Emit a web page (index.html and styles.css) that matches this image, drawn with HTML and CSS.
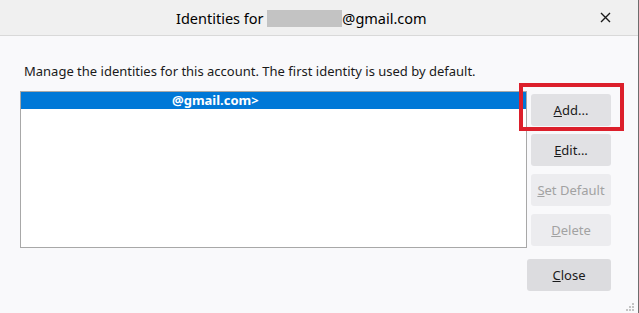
FILE: index.html
```html
<!DOCTYPE html>
<html lang="en">
<head>
    <meta charset="UTF-8">
    <title>Identities</title>
    <link rel="stylesheet" href="styles.css">
</head>
<body>
    <div class="window">
        <div class="titlebar">
            <span class="title">Identities for <span class="redacted"></span>@gmail.com</span>
            <span class="close-x">
                <svg width="11" height="11" viewBox="0 0 11 11"><path d="M1 1 L10 10 M10 1 L1 10" stroke="#1a1a1a" stroke-width="1.4" fill="none"/></svg>
            </span>
        </div>

        <div class="content">
            <p class="message">Manage the identities for this account. The first identity is used by default.</p>

            <div class="main">
                <div class="listbox">
                    <div class="item selected">@gmail.com&gt;</div>
                </div>
                <div class="buttons">
                    <div class="highlight-wrap">
                        <button class="btn"><u>A</u>dd...</button>
                        <div class="highlight"></div>
                    </div>
                    <button class="btn"><u>E</u>dit...</button>
                    <button class="btn" disabled><u>S</u>et Default</button>
                    <button class="btn" disabled><u>D</u>elete</button>
                </div>
            </div>

            <div class="footer">
                <button class="btn close-btn"><u>C</u>lose</button>
            </div>
        </div>

        <svg class="grip" width="10" height="10" viewBox="0 0 10 10">
            <rect x="7" y="1" width="2" height="2" fill="#c4c4c4"/>
            <rect x="4" y="4" width="2" height="2" fill="#c4c4c4"/>
            <rect x="7" y="4" width="2" height="2" fill="#c4c4c4"/>
            <rect x="1" y="7" width="2" height="2" fill="#c4c4c4"/>
            <rect x="4" y="7" width="2" height="2" fill="#c4c4c4"/>
            <rect x="7" y="7" width="2" height="2" fill="#c4c4c4"/>
        </svg>
    </div>
</body>
</html>
```

FILE: styles.css
```css
/* Dialog window */
body {
    margin: 0;
    padding: 0;
    font-family: "Noto Sans", "Open Sans", sans-serif;
    font-size: 13px;
    color: #1a1a1a;
    background-color: #f9f9fb;
}
.window {
    position: relative;
    width: 639px;
    height: 313px;
    box-sizing: border-box;
    border-right: 1px solid #6d6d6d;
    background-color: #f9f9fb;
    overflow: hidden;
}
.titlebar {
    height: 35px;
    display: flex;
    align-items: center;
    padding-left: 176px;
    background-color: #f0f0f0;
    border-bottom: 1px solid #d9d9d9;
}
.title {
    font-size: 14.5px;
    color: #000;
}
.redacted {
    display: inline-block;
    width: 75px;
    height: 17px;
    vertical-align: -3px;
    background-color: #c3c3c3;
}
.close-x {
    margin-left: auto;
    width: 44px;
    display: flex;
    justify-content: center;
    padding-right: 11px;
}
.content {
    padding: 26px 27px 0 20px;
}
.message {
    margin: 0 0 11px 4px;
    line-height: 18px;
}
.main {
    display: flex;
}
.listbox {
    width: 507px;
    height: 157px;
    box-sizing: border-box;
    border: 1px solid #a8a8a8;
    background-color: #fff;
}
.item {
    height: 17px;
    line-height: 17px;
    padding-left: 151px;
    font-weight: bold;
}
.item.selected {
    background-color: #0078d7;
    color: #fff;
}
.buttons {
    display: flex;
    flex-direction: column;
    gap: 8px;
    margin-left: 4px;
    padding-top: 3px;
}
.btn {
    width: 80px;
    height: 32px;
    padding: 0;
    border: none;
    border-radius: 3px;
    background-color: #e1e1e4;
    font-family: inherit;
    font-size: 13px;
    color: #1a1a1a;
}
.btn:disabled {
    background-color: #ececef;
    color: #a2a2a2;
}
.highlight-wrap {
    position: relative;
    height: 32px;
}
.highlight {
    position: absolute;
    left: -12px;
    top: -11px;
    width: 105px;
    height: 48px;
    box-sizing: border-box;
    border: 4px solid #dc1f2b;
}
.footer {
    display: flex;
    justify-content: flex-end;
    margin-top: 11px;
}
.close-btn {
    width: 84px;
    background-color: #dcdcdf;
}
.grip {
    position: absolute;
    right: 3px;
    bottom: 1px;
}
```
